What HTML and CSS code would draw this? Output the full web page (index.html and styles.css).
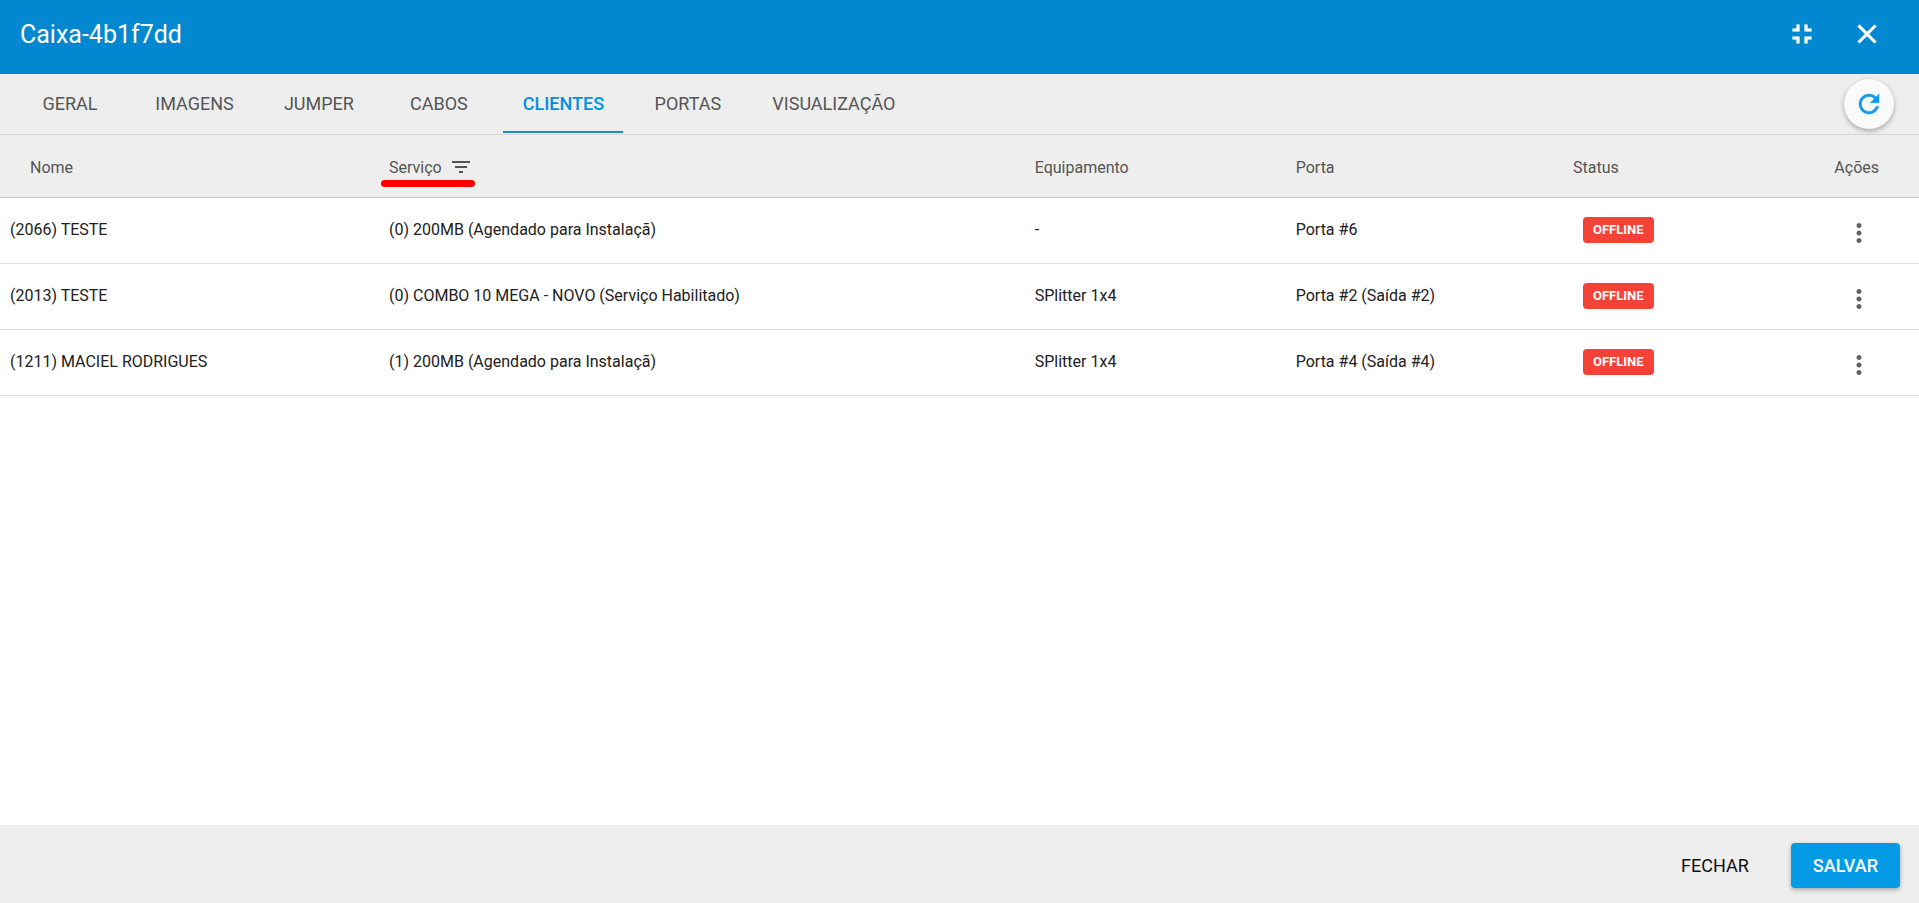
FILE: index.html
```
<!DOCTYPE html>
<html lang="pt-BR">
<head>
    <meta charset="UTF-8">
    <meta name="viewport" content="width=device-width, initial-scale=1.0">
    <title>Caixa-4b1f7dd</title>
    <link rel="stylesheet" href="styles.css">
</head>
<body>
    <header class="topbar">
        <h1>Caixa-4b1f7dd</h1>
        <div class="topbar-actions">
            <button type="button" aria-label="Restaurar">
                <svg viewBox="0 0 24 24"><path d="M5 16h3v3h2v-5H5v2zm3-8H5v2h5V5H8v3zm6 11h2v-3h3v-2h-5v5zm2-11V5h-2v5h5V8h-3z"/></svg>
            </button>
            <button type="button" aria-label="Fechar janela">
                <svg viewBox="0 0 24 24"><path d="M19 6.41L17.59 5 12 10.59 6.41 5 5 6.41 10.59 12 5 17.59 6.41 19 12 13.41 17.59 19 19 17.59 13.41 12z"/></svg>
            </button>
        </div>
    </header>

    <div class="toolbar">
        <nav class="tabs">
            <a href="#">GERAL</a>
            <a href="#">IMAGENS</a>
            <a href="#">JUMPER</a><a href="#">CABOS</a>
            <a href="#" class="active">CLIENTES</a>
            <a href="#">PORTAS</a>
            <a href="#">VISUALIZAÇÃO</a>
        </nav>
        <button type="button" class="refresh" aria-label="Atualizar">
            <svg viewBox="0 0 24 24"><path d="M17.65 6.35C16.2 4.9 14.21 4 12 4c-4.42 0-7.99 3.58-7.99 8s3.57 8 7.99 8c3.73 0 6.84-2.55 7.73-6h-2.08c-.82 2.33-3.04 4-5.65 4-3.31 0-6-2.69-6-6s2.69-6 6-6c1.66 0 3.14.69 4.22 1.78L13 11h7V4l-2.35 2.35z"/></svg>
        </button>
    </div>

    <main class="content">
        <table class="clients">
            <colgroup>
                <col class="col-name">
                <col class="col-service">
                <col class="col-equipment">
                <col class="col-port">
                <col class="col-status">
                <col class="col-actions">
            </colgroup>
            <thead>
                <tr>
                    <th class="name">Nome</th>
                    <th>
                        <button type="button" class="filter">
                            Serviço
                            <svg viewBox="0 0 24 24"><path d="M10 18h4v-2h-4v2zM3 6v2h18V6H3zm3 7h12v-2H6v2z"/></svg>
                        </button>
                    </th>
                    <th>Equipamento</th>
                    <th>Porta</th>
                    <th>Status</th>
                    <th class="actions">Ações</th>
                </tr>
            </thead>
            <tbody>
                <tr>
                    <td>(2066) TESTE</td>
                    <td>(0) 200MB (Agendado para Instalaçã)</td>
                    <td>-</td>
                    <td>Porta #6</td>
                    <td><span class="badge">OFFLINE</span></td>
                    <td class="actions">
                        <button type="button" class="more" aria-label="Ações">
                            <svg viewBox="0 0 24 24"><path d="M12 8c1.1 0 2-.9 2-2s-.9-2-2-2-2 .9-2 2 .9 2 2 2zm0 2c-1.1 0-2 .9-2 2s.9 2 2 2 2-.9 2-2-.9-2-2-2zm0 6c-1.1 0-2 .9-2 2s.9 2 2 2 2-.9 2-2-.9-2-2-2z"/></svg>
                        </button>
                    </td>
                </tr>
                <tr>
                    <td>(2013) TESTE</td>
                    <td>(0) COMBO 10 MEGA - NOVO (Serviço Habilitado)</td>
                    <td>SPlitter 1x4</td>
                    <td>Porta #2 (Saída #2)</td>
                    <td><span class="badge">OFFLINE</span></td>
                    <td class="actions">
                        <button type="button" class="more" aria-label="Ações">
                            <svg viewBox="0 0 24 24"><path d="M12 8c1.1 0 2-.9 2-2s-.9-2-2-2-2 .9-2 2 .9 2 2 2zm0 2c-1.1 0-2 .9-2 2s.9 2 2 2 2-.9 2-2-.9-2-2-2zm0 6c-1.1 0-2 .9-2 2s.9 2 2 2 2-.9 2-2-.9-2-2-2z"/></svg>
                        </button>
                    </td>
                </tr>
                <tr>
                    <td>(1211) MACIEL RODRIGUES</td>
                    <td>(1) 200MB (Agendado para Instalaçã)</td>
                    <td>SPlitter 1x4</td>
                    <td>Porta #4 (Saída #4)</td>
                    <td><span class="badge">OFFLINE</span></td>
                    <td class="actions">
                        <button type="button" class="more" aria-label="Ações">
                            <svg viewBox="0 0 24 24"><path d="M12 8c1.1 0 2-.9 2-2s-.9-2-2-2-2 .9-2 2 .9 2 2 2zm0 2c-1.1 0-2 .9-2 2s.9 2 2 2 2-.9 2-2-.9-2-2-2zm0 6c-1.1 0-2 .9-2 2s.9 2 2 2 2-.9 2-2-.9-2-2-2z"/></svg>
                        </button>
                    </td>
                </tr>
            </tbody>
        </table>
    </main>

    <footer class="footer">
        <button type="button" class="btn">FECHAR</button>
        <button type="button" class="btn primary">SALVAR</button>
    </footer>
</body>
</html>
```
FILE: styles.css
```
* {
    box-sizing: border-box;
}

body {
    margin: 0;
    min-height: 100vh;
    display: flex;
    flex-direction: column;
    background-color: #fff;
    color: #212121;
    font-family: Roboto, sans-serif;
    font-size: 16px;
}

button {
    font: inherit;
    color: inherit;
    background: none;
    border: none;
    padding: 0;
    cursor: pointer;
}

svg {
    display: block;
    fill: currentColor;
}

/* Top bar */
.topbar {
    display: flex;
    justify-content: space-between;
    align-items: center;
    height: 74px;
    padding: 0 36px 6px 20px;
    background-color: #0288d1;
    color: #fff;
}

.topbar h1 {
    margin: 0;
    font-size: 25px;
    font-weight: 400;
}

.topbar-actions {
    display: flex;
    gap: 33px;
}

.topbar-actions svg {
    width: 32px;
    height: 32px;
    stroke: currentColor;
    stroke-width: 0.4;
}

/* Tabs */
.toolbar {
    display: flex;
    justify-content: space-between;
    align-items: center;
    height: 61px;
    padding: 0 25px 0 10px;
    background-color: #eee;
    border-bottom: 1px solid #d6d6d6;
}

.tabs {
    align-self: flex-start;
    font-size: 18px;
}

.tabs a {
    display: inline-block;
    min-width: 120px;
    height: 59px;
    padding: 0 20px;
    line-height: 59px;
    text-align: center;
    text-decoration: none;
    color: #555;
}

.tabs a.active {
    padding: 0 19px;
    color: #0490dd;
    font-weight: 500;
    border-bottom: 2px solid #1a8fc4;
}

.refresh {
    display: flex;
    justify-content: center;
    align-items: center;
    width: 50px;
    height: 50px;
    border-radius: 50%;
    background-color: #fafafa;
    color: #0d9ae6;
    box-shadow: 0 2px 5px rgba(0, 0, 0, 0.3);
}

.refresh svg {
    width: 30px;
    height: 30px;
    stroke: currentColor;
    stroke-width: 0.4;
}

/* Clients table */
.content {
    flex: 1;
}

.clients {
    width: 100%;
    table-layout: fixed;
    border-collapse: separate;
    border-spacing: 0;
}

.col-name {
    width: 19.75%;
}

.col-service {
    width: 33.65%;
}

.col-equipment {
    width: 13.6%;
}

.col-port {
    width: 14.45%;
}

.col-status {
    width: 11%;
}

.clients th,
.clients td {
    padding: 0 10px;
    text-align: left;
    border-bottom: 1px solid #ddd;
}

.clients th {
    height: 63px;
    padding-top: 2px;
    background-color: #eee;
    border-bottom-color: #ccc;
    color: #555;
    font-weight: 400;
}

.clients td {
    height: 66px;
    padding-bottom: 2px;
}

.clients th.name {
    padding-left: 30px;
}

.clients .actions {
    padding-right: 40px;
    text-align: right;
}

.filter {
    position: relative;
    display: flex;
    align-items: center;
    gap: 7px;
}

.filter svg {
    width: 24px;
    height: 24px;
}

.filter::after {
    content: "";
    position: absolute;
    left: -8px;
    right: -2px;
    bottom: -8px;
    height: 7px;
    border-radius: 4px;
    background-color: #f00;
}

.badge {
    display: inline-block;
    margin-left: 10px;
    padding: 0 10px;
    border-radius: 4px;
    background-color: #f44336;
    color: #fff;
    font-size: 13px;
    font-weight: 700;
    line-height: 26px;
}

.more {
    padding-top: 10px;
    margin-right: 5px;
    color: #616161;
}

.more svg {
    width: 30px;
    height: 30px;
}

/* Footer */
.footer {
    display: flex;
    justify-content: flex-end;
    align-items: center;
    gap: 20px;
    height: 78px;
    padding: 2px 19px 0;
    background-color: #eee;
}

.btn {
    height: 45px;
    padding: 0 22px;
    border-radius: 4px;
    color: #111;
    font-size: 18px;
    font-weight: 400;
}

.btn.primary {
    background-color: #039be5;
    color: #fff;
    font-weight: 500;
    box-shadow: 0 2px 5px rgba(0, 0, 0, 0.3);
}
```
